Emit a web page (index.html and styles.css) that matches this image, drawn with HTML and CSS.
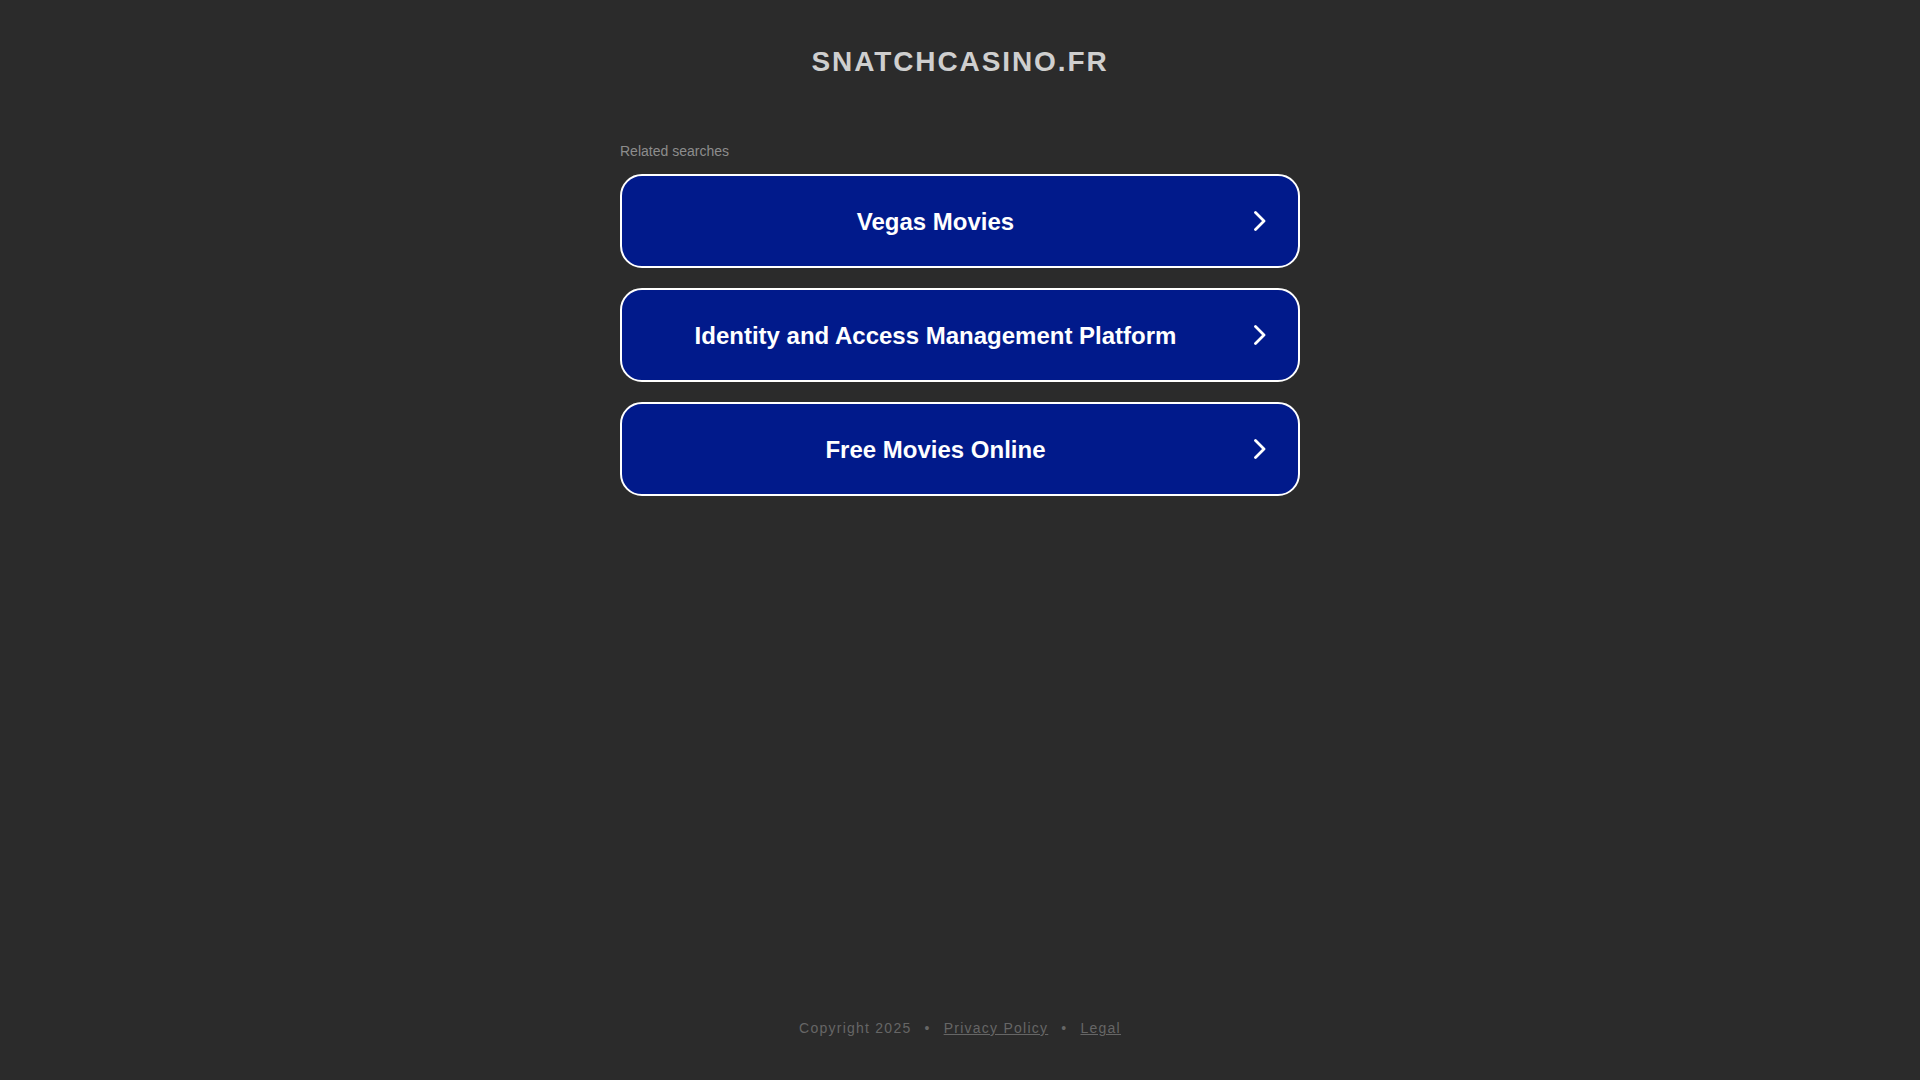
FILE: index.html
```
<!DOCTYPE html>
<html lang="en">
<head>
<meta charset="utf-8">
<title>snatchcasino.fr</title>
<link rel="stylesheet" href="styles.css">
</head>
<body>
<div class="page">
  <header class="header">
    <h1 class="domain">SNATCHCASINO.FR</h1>
  </header>
  <main class="main">
    <div class="related">Related searches</div>
    <div class="links">
      <a class="link" href="#"><span class="link-text">Vegas Movies</span><span class="link-arrow"><svg width="12" height="20" viewBox="0 0 12 20"><polyline points="1.5,1.5 10,10 1.5,18.5" fill="none" stroke="#ffffff" stroke-width="2.8" stroke-linecap="round" stroke-linejoin="round"/></svg></span></a>
      <a class="link" href="#"><span class="link-text">Identity and Access Management Platform</span><span class="link-arrow"><svg width="12" height="20" viewBox="0 0 12 20"><polyline points="1.5,1.5 10,10 1.5,18.5" fill="none" stroke="#ffffff" stroke-width="2.8" stroke-linecap="round" stroke-linejoin="round"/></svg></span></a>
      <a class="link" href="#"><span class="link-text">Free Movies Online</span><span class="link-arrow"><svg width="12" height="20" viewBox="0 0 12 20"><polyline points="1.5,1.5 10,10 1.5,18.5" fill="none" stroke="#ffffff" stroke-width="2.8" stroke-linecap="round" stroke-linejoin="round"/></svg></span></a>
    </div>
  </main>
  <footer class="footer">
    <span>Copyright 2025</span><span class="dot">•</span><a href="#" class="flink">Privacy Policy</a><span class="dot">•</span><a href="#" class="flink">Legal</a>
  </footer>
</div>
</body>
</html>
```
FILE: styles.css
```
html, body {
  margin: 0;
  padding: 0;
}
body {
  background: #2b2b2b;
  font-family: "Liberation Sans", Arial, Helvetica, sans-serif;
}
.page {
  min-height: 100vh;
  display: flex;
  flex-direction: column;
  align-items: center;
}
.header {
  padding-top: 46px;
}
.domain {
  margin: 0;
  font-size: 28px;
  line-height: 32px;
  font-weight: bold;
  letter-spacing: 1.9px;
  color: #cfcfcf;
  text-align: center;
}
.main {
  width: 680px;
  margin-top: 65px;
}
.related {
  font-size: 14px;
  line-height: 16px;
  color: #8d8d8d;
  margin-bottom: 15px;
}
.links {
  display: flex;
  flex-direction: column;
  gap: 20px;
}
.link {
  box-sizing: border-box;
  height: 94px;
  display: flex;
  align-items: center;
  background: #011a8b;
  border: 2px solid #ffffff;
  border-radius: 22px;
  text-decoration: none;
  color: #ffffff;
}
.link-text {
  flex: 1;
  text-align: center;
  font-size: 24px;
  font-weight: bold;
  line-height: 28px;
  padding-top: 2px;
}
.link-arrow {
  width: 44px;
  padding-left: 5px;
  display: flex;
  align-items: center;
}
.link-arrow svg {
  display: block;
}
.footer {
  margin-top: auto;
  padding-bottom: 42px;
  font-size: 14px;
  line-height: 20px;
  letter-spacing: 1.25px;
  color: #666666;
  display: flex;
  align-items: center;
}
.dot {
  margin: 0 13px;
}
.flink {
  color: #666666;
  text-decoration: underline;
}
```
